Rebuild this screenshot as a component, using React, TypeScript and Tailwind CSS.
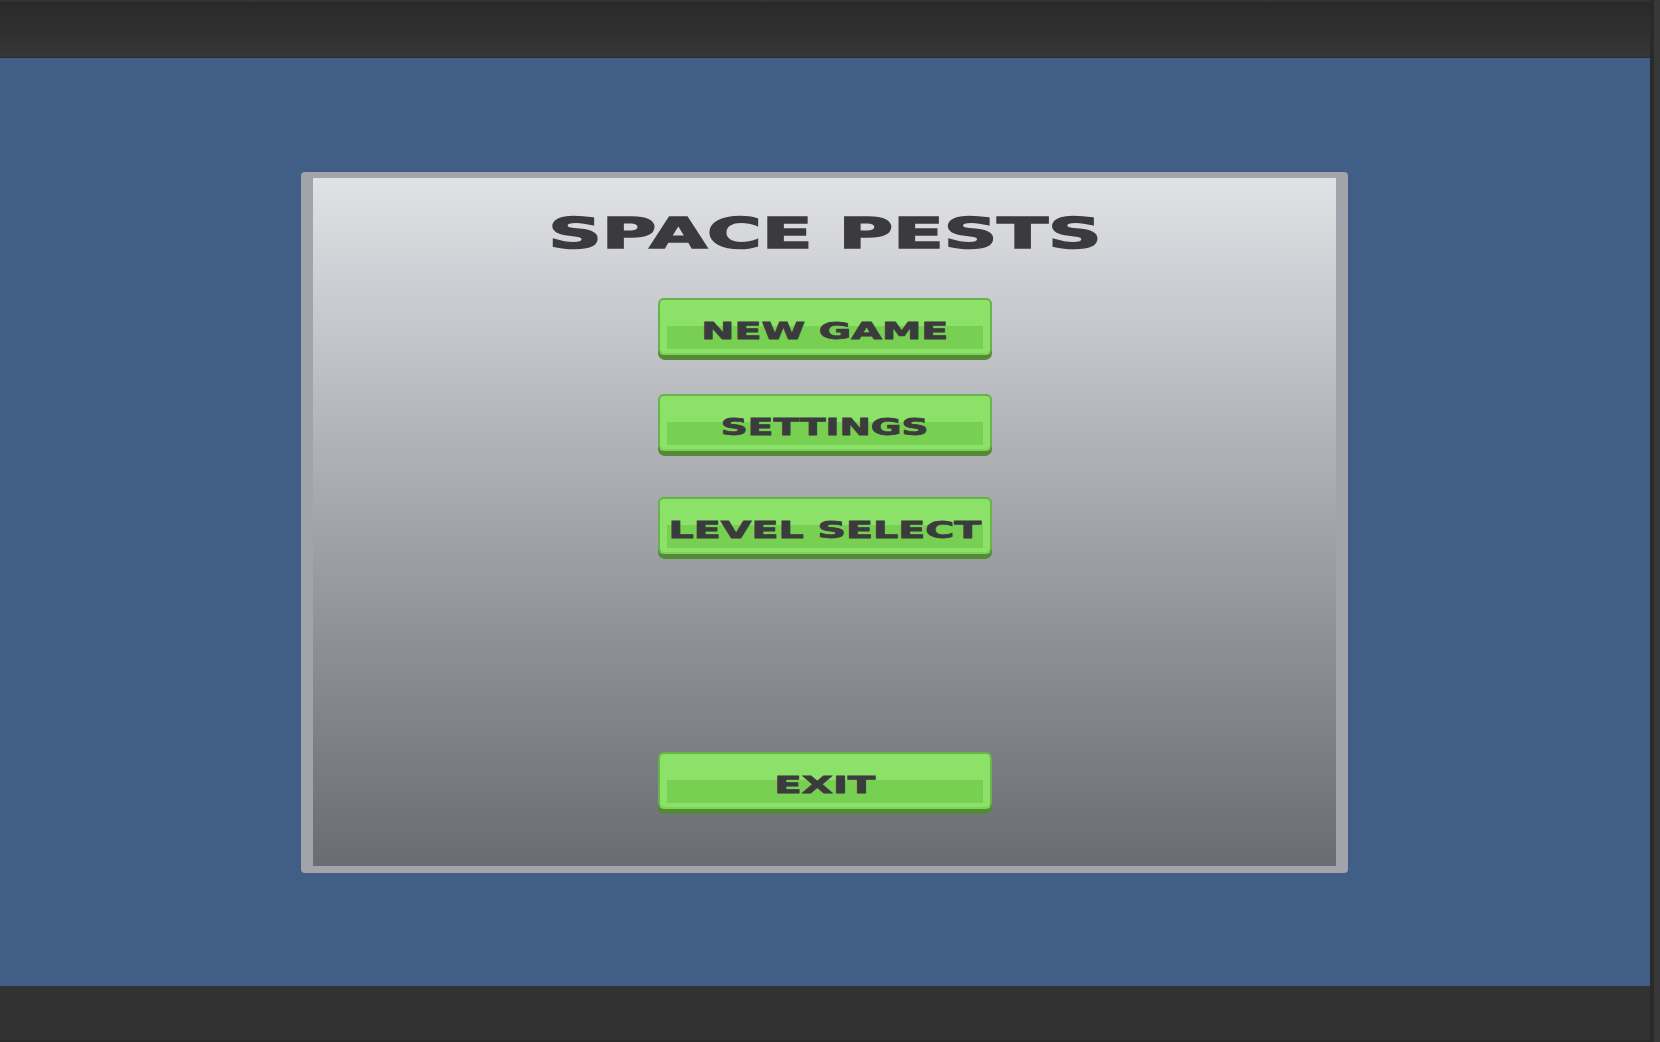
const labelFont = "font-['DejaVu_Sans',sans-serif] font-bold text-[#3b3b3d]"

function MenuButton({ label, stretch, className = '' }: { label: string; stretch: string; className?: string }) {
  return (
    <button
      type="button"
      className={`flex h-[62px] w-[334px] shrink-0 rounded-[7px] bg-[#528a35] pb-[5px] ${className}`}
    >
      <span className="relative flex flex-1 items-center justify-center overflow-hidden rounded-[6px] border-2 border-[#67b549] border-b-[#7ed259] bg-[#8ce268] pt-[9px]">
        <span className="absolute inset-x-[7px] top-[26px] bottom-[4px] bg-[#78d052]" />
        <span className={`relative inline-block whitespace-nowrap text-[23px] leading-[28px] [-webkit-text-stroke:0.8px_#3b3b3d] ${labelFont} ${stretch}`}>{label}</span>
      </span>
    </button>
  )
}

export default function App() {
  return (
    <div className="flex h-screen w-full overflow-hidden bg-[#323232]">
      <div className="flex min-w-0 flex-1 flex-col">
        <div className="h-[58px] shrink-0 border-t-2 border-b border-t-[#333333] border-b-[#2b2b2b] bg-gradient-to-b from-[#292929] to-[#363636]" />

        <div className="flex-1 bg-[#415e87] pt-[114px] pl-[301px]">
          <div className="flex h-[701px] w-[1047px] rounded-[4px] bg-[#a2a3ab] pt-[6px] pr-[12px] pb-[7px] pl-[12px]">
            <div className="flex flex-1 flex-col items-center bg-gradient-to-b from-[#e1e2e6] to-[#6a6b73] pt-[31px]">
              <h1 className={`h-[48px] text-[43px] leading-[48px] whitespace-nowrap scale-x-[1.73] [-webkit-text-stroke:1.5px_#3b3b3d] ${labelFont}`}>SPACE PESTS</h1>

              <MenuButton label="NEW GAME" stretch="scale-x-[1.72]" className="mt-[41px]" />
              <MenuButton label="SETTINGS" stretch="scale-x-[1.63]" className="mt-[34px]" />
              <MenuButton label="LEVEL SELECT" stretch="scale-x-[1.72]" className="mt-[41px]" />
              <MenuButton label="EXIT" stretch="scale-x-[1.75]" className="mt-[193px]" />
            </div>
          </div>
        </div>

        <div className="h-[56px] shrink-0 border-b-2 border-[#2a2a2a] bg-[#323232]" />
      </div>

      <div className="flex w-[10px] shrink-0 border-l-4 border-[#2a2a2a] bg-[#383838]" />
    </div>
  )
}
